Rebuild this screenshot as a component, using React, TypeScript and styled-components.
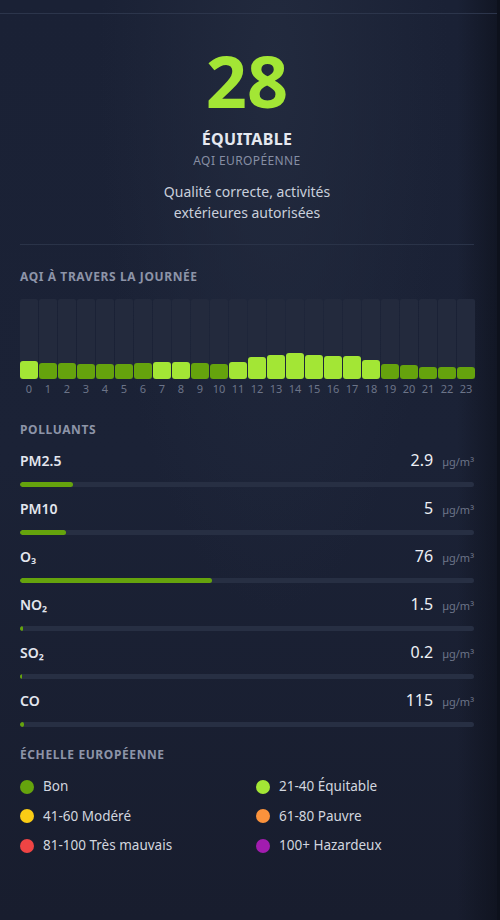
import React from 'react';
import styled, { createGlobalStyle } from 'styled-components';

const GlobalStyle = createGlobalStyle`
  html, body {
    margin: 0;
    padding: 0;
    background: #0d111c;
  }
  body {
    font-family: 'Segoe UI', 'Noto Sans', 'Open Sans', sans-serif;
    -webkit-font-smoothing: antialiased;
  }
`;

const LIME = '#a3e635';
const GREEN = '#65a30d';

const hourly = [23, 20, 20, 19, 19, 19, 20, 21, 21, 20, 19, 21, 28, 30, 32, 30, 29, 29, 24, 19, 17, 15, 15, 15];

const pollutants = [
  { name: 'PM2.5', value: '2.9', pct: 11.7 },
  { name: 'PM10', value: '5', pct: 10.1 },
  { name: 'O₃', value: '76', pct: 42.3 },
  { name: 'NO₂', value: '1.5', pct: 0.6 },
  { name: 'SO₂', value: '0.2', pct: 0.3 },
  { name: 'CO', value: '115', pct: 0.9 },
];

const scale = [
  { label: 'Bon', color: GREEN },
  { label: '21-40 Équitable', color: LIME },
  { label: '41-60 Modéré', color: '#facc15' },
  { label: '61-80 Pauvre', color: '#fb923c' },
  { label: '81-100 Très mauvais', color: '#ef4444' },
  { label: '100+ Hazardeux', color: '#a21caf' },
];

const Page = styled.div`
  width: 500px;
  min-height: 920px;
  display: flex;
  background: #0d111c;
`;

const Panel = styled.div`
  width: 497px;
  min-height: 920px;
  background:
    linear-gradient(to right, rgba(10, 13, 22, 0) 92%, rgba(10, 13, 22, 0.55) 100%),
    radial-gradient(ellipse at 55% 8%, #222a3e 0%, rgba(27, 34, 54, 0) 45%),
    linear-gradient(to bottom, #1a2135 0%, #1b2236 50%, #181d2e 100%);
`;

const TopStrip = styled.div`
  height: 13px;
  border-bottom: 1px solid #2c354b;
`;

const Content = styled.div`
  padding: 0 23px 0 20px;
`;

const Hero = styled.section`
  display: flex;
  flex-direction: column;
  align-items: center;
  padding-top: 17px;
  padding-bottom: 21px;
  border-bottom: 1px solid #2a3348;
  text-align: center;
`;

const BigValue = styled.div`
  font-size: 72px;
  font-weight: 700;
  line-height: 98px;
  color: ${LIME};
`;

const Level = styled.div`
  font-size: 16px;
  font-weight: 700;
  line-height: 20px;
  letter-spacing: 0.3px;
  color: #e6e9f0;
`;

const Standard = styled.div`
  margin-top: 4px;
  font-size: 12px;
  line-height: 16px;
  letter-spacing: 0.4px;
  color: #868ea3;
`;

const Description = styled.p`
  margin: 12px 0 0;
  font-size: 14px;
  line-height: 21px;
  color: #c9cfdb;
`;

const Section = styled.section<{ $top: number }>`
  margin-top: ${(p) => p.$top}px;
`;

const SectionTitle = styled.h3`
  margin: 0;
  font-size: 12px;
  font-weight: 700;
  line-height: 16px;
  letter-spacing: 0.6px;
  text-transform: uppercase;
  color: #8d94a8;
`;

const Chart = styled.div`
  margin-top: 14px;
  display: grid;
  grid-template-columns: repeat(24, 18px);
  column-gap: 1px;
`;

const Hour = styled.div`
  display: flex;
  flex-direction: column;
  align-items: stretch;
`;

const Column = styled.div`
  height: 80px;
  display: flex;
  align-items: flex-end;
  background: #232a3d;
  border-radius: 2px 2px 0 0;
`;

const Bar = styled.div<{ $color: string }>`
  width: 100%;
  background: ${(p) => p.$color};
  border-radius: 3px;
`;

const HourLabel = styled.span`
  margin-top: 3px;
  font-size: 11px;
  line-height: 14px;
  text-align: center;
  color: #6c7488;
`;

const Rows = styled.div`
  margin-top: 12px;
  display: flex;
  flex-direction: column;
  gap: 11px;
`;

const Row = styled.div`
  display: flex;
  flex-direction: column;
`;

const RowHead = styled.div`
  display: flex;
  justify-content: space-between;
  align-items: baseline;
`;

const Name = styled.span`
  font-size: 14px;
  font-weight: 600;
  line-height: 20px;
  color: #e3e6ee;
`;

const Reading = styled.span`
  display: flex;
  align-items: baseline;
  gap: 9px;
`;

const Value = styled.span`
  font-size: 16px;
  line-height: 20px;
  color: #eef0f5;
`;

const Unit = styled.span`
  font-size: 11px;
  color: #6c7488;
`;

const Track = styled.div`
  margin-top: 11px;
  height: 5px;
  border-radius: 3px;
  background: #272f43;
  overflow: hidden;
`;

const Fill = styled.div`
  height: 100%;
  min-width: 2px;
  border-radius: 3px;
  background: ${GREEN};
`;

const Legend = styled.div`
  margin-top: 14px;
  display: grid;
  grid-template-columns: 236px 1fr;
  row-gap: 10px;
`;

const LegendItem = styled.div`
  display: flex;
  align-items: center;
  gap: 9px;
  font-size: 13.5px;
  line-height: 19.5px;
  color: #d2d6df;
`;

const Dot = styled.span<{ $color: string }>`
  width: 14px;
  height: 14px;
  border-radius: 50%;
  background: ${(p) => p.$color};
  flex-shrink: 0;
`;

export default function App() {
  return (
    <Page>
      <GlobalStyle />
      <Panel>
        <TopStrip />
        <Content>
          <Hero>
            <BigValue>28</BigValue>
            <Level>ÉQUITABLE</Level>
            <Standard>AQI EUROPÉENNE</Standard>
            <Description>
              Qualité correcte, activités
              <br />
              extérieures autorisées
            </Description>
          </Hero>

          <Section $top={24}>
            <SectionTitle>AQI à travers la journée</SectionTitle>
            <Chart>
              {hourly.map((v, i) => (
                <Hour key={i}>
                  <Column>
                    <Bar style={{ height: `${v * 0.8}px` }} $color={v > 20 ? LIME : GREEN} />
                  </Column>
                  <HourLabel>{i}</HourLabel>
                </Hour>
              ))}
            </Chart>
          </Section>

          <Section $top={26}>
            <SectionTitle>Polluants</SectionTitle>
            <Rows>
              {pollutants.map((p) => (
                <Row key={p.name}>
                  <RowHead>
                    <Name>{p.name}</Name>
                    <Reading>
                      <Value>{p.value}</Value>
                      <Unit>µg/m³</Unit>
                    </Reading>
                  </RowHead>
                  <Track>
                    <Fill style={{ width: `${p.pct}%` }} />
                  </Track>
                </Row>
              ))}
            </Rows>
          </Section>

          <Section $top={20}>
            <SectionTitle>Échelle européenne</SectionTitle>
            <Legend>
              {scale.map((s) => (
                <LegendItem key={s.label}>
                  <Dot $color={s.color} />
                  {s.label}
                </LegendItem>
              ))}
            </Legend>
          </Section>
        </Content>
      </Panel>
    </Page>
  );
}
